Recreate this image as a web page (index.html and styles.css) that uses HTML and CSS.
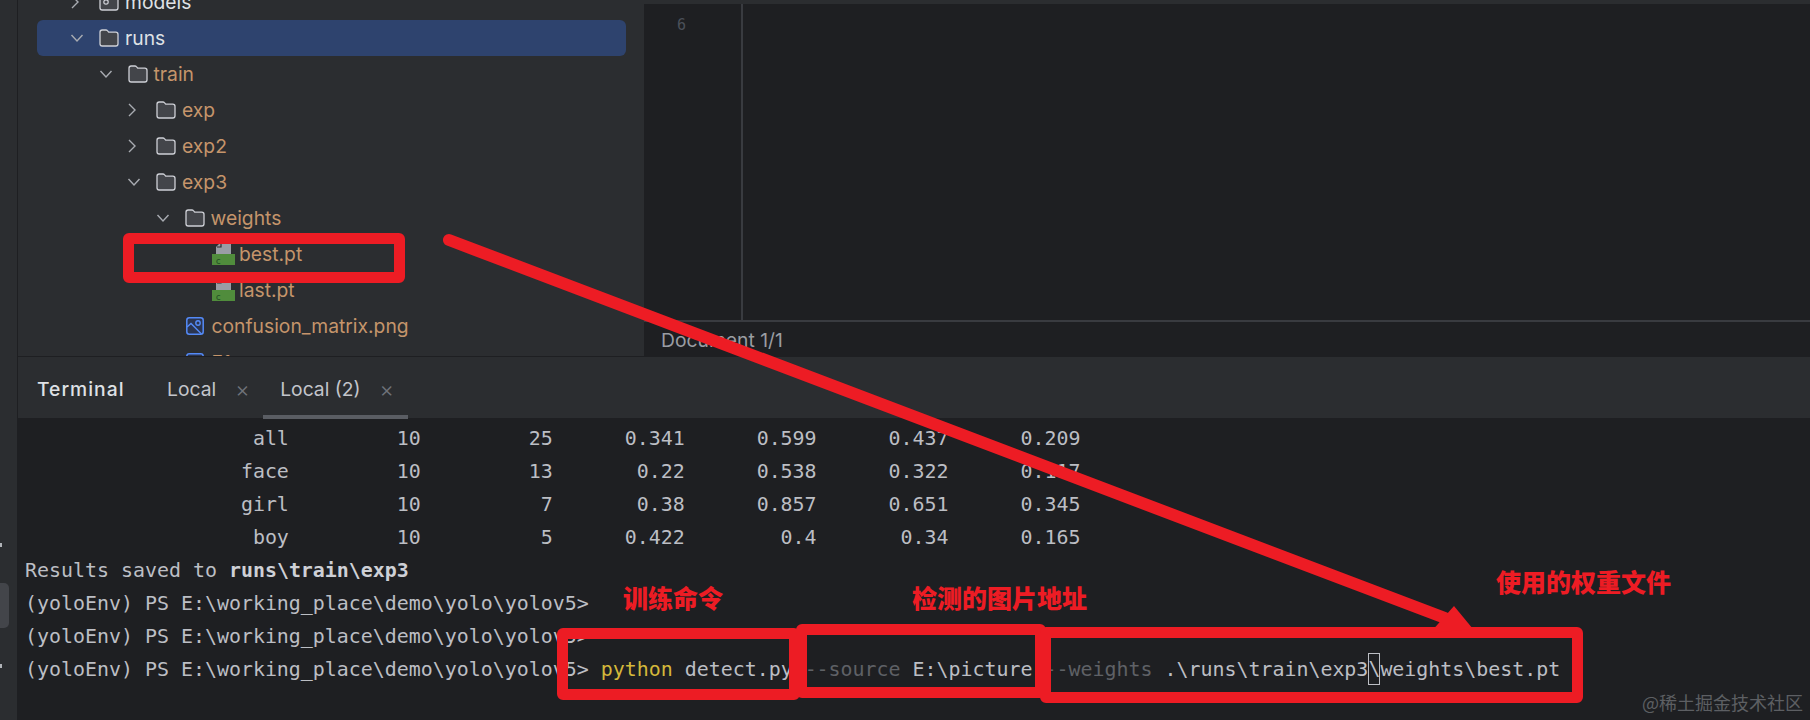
FILE: index.html
```html
<!DOCTYPE html>
<html lang="en">
<head>
<meta charset="utf-8">
<title>Terminal</title>
<link rel="stylesheet" href="styles.css">
</head>
<body>
<svg class="defs" width="0" height="0" aria-hidden="true">
  <symbol id="folder" viewBox="0 0 20 18"><path d="M1 3.200C1 2 2 1 3.200 1h3.700c.6 0 1.100.2 1.500.7l1.300 1.500h7.100C18 3.200 19 4.200 19 5.400v9.400C19 16 18 17 16.800 17H3.200C2 17 1 16 1 14.800z" fill="#43454a" stroke="#ced0d6" stroke-width="1.300"/></symbol>
  <symbol id="module" viewBox="0 0 20 18"><path d="M1 3.200C1 2 2 1 3.200 1h13.600C18 1 19 2 19 3.200v11.600C19 16 18 17 16.800 17H3.200C2 17 1 16 1 14.800z" fill="#43454a" stroke="#ced0d6" stroke-width="1.300"/><circle cx="7" cy="9" r="2.200" fill="none" stroke="#ced0d6" stroke-width="1.200"/></symbol>
  <symbol id="down" viewBox="0 0 14 10"><path d="M1.500 2l5.500 6 5.500-6" fill="none" stroke="#a8abb1" stroke-width="1.400"/></symbol>
  <symbol id="right" viewBox="0 0 10 14"><path d="M2 1l6 6-6 6" fill="none" stroke="#a8abb1" stroke-width="1.400"/></symbol>
  <symbol id="pt" viewBox="0 0 23 23"><path d="M9 0h10v12H4V5z" fill="#9a9da5"/><path d="M9 1v4H5" fill="none" stroke="#2b2d30" stroke-width="1.200"/><rect x="0" y="12" width="23" height="11" fill="#508c3c"/><text x="3.500" y="21.500" class="pt-letter">c</text></symbol>
  <symbol id="image" viewBox="0 0 18 18"><rect x=".8" y=".8" width="16.400" height="16.400" rx="2.500" fill="#2b3550" stroke="#548af7" stroke-width="1.500"/><circle cx="12" cy="6" r="2.200" fill="none" stroke="#548af7" stroke-width="1.400"/><path d="M1 10l4-3.500L15.500 17" fill="none" stroke="#548af7" stroke-width="1.400"/></symbol>
</svg>

<div class="app">
  <aside class="rail">
    <span class="rail-dot rail-dot-a"></span>
    <span class="rail-btn"></span>
    <span class="rail-dot rail-dot-b"></span>
  </aside>

  <div class="main">
    <div class="top">
      <nav class="sidebar">
        <div class="tree">
          <div class="row d0"><span class="chev"><svg class="chev-r"><use href="#right"/></svg></span><svg class="ic-folder"><use href="#module"/></svg><span class="label plain">models</span></div>
          <div class="row d0 selected"><span class="chev"><svg class="chev-d"><use href="#down"/></svg></span><svg class="ic-folder"><use href="#folder"/></svg><span class="label plain">runs</span></div>
          <div class="row d1"><span class="chev"><svg class="chev-d"><use href="#down"/></svg></span><svg class="ic-folder"><use href="#folder"/></svg><span class="label">train</span></div>
          <div class="row d2"><span class="chev"><svg class="chev-r"><use href="#right"/></svg></span><svg class="ic-folder"><use href="#folder"/></svg><span class="label">exp</span></div>
          <div class="row d2"><span class="chev"><svg class="chev-r"><use href="#right"/></svg></span><svg class="ic-folder"><use href="#folder"/></svg><span class="label">exp2</span></div>
          <div class="row d2"><span class="chev"><svg class="chev-d"><use href="#down"/></svg></span><svg class="ic-folder"><use href="#folder"/></svg><span class="label">exp3</span></div>
          <div class="row d3"><span class="chev"><svg class="chev-d"><use href="#down"/></svg></span><svg class="ic-folder"><use href="#folder"/></svg><span class="label">weights</span></div>
          <div class="row d4"><span class="chev"></span><svg class="ic-pt"><use href="#pt"/></svg><span class="label">best.pt</span></div>
          <div class="row d4"><span class="chev"></span><svg class="ic-pt"><use href="#pt"/></svg><span class="label">last.pt</span></div>
          <div class="row d3"><span class="chev"></span><svg class="ic-img"><use href="#image"/></svg><span class="label">confusion_matrix.png</span></div>
          <div class="row d3"><span class="chev"></span><svg class="ic-img"><use href="#image"/></svg><span class="label">F1_curve.png</span></div>
        </div>
      </nav>
      <section class="editor">
        <div class="editor-body">
          <div class="gutter"><span class="line-no">6</span></div>
          <div class="code"></div>
        </div>
        <div class="doc-status">Document 1/1</div>
      </section>
    </div>

    <section class="panel">
      <header class="panel-head">
        <span class="panel-title">Terminal</span>
        <span class="tab"><span>Local</span><span class="x">×</span></span>
        <span class="tab active"><span>Local (2)</span><span class="x">×</span></span>
      </header>
      <pre class="term">                   all         10         25      0.341      0.599      0.437      0.209
                  face         10         13       0.22      0.538      0.322      0.117
                  girl         10          7       0.38      0.857      0.651      0.345
                   boy         10          5      0.422        0.4       0.34      0.165
Results saved to <b>runs\train\exp3</b>
(yoloEnv) PS E:\working_place\demo\yolo\yolov5&gt;
(yoloEnv) PS E:\working_place\demo\yolo\yolov5&gt;
(yoloEnv) PS E:\working_place\demo\yolo\yolov5&gt; <span class="cmd">python</span> detect.py <span class="opt">--source</span> E:\picture <span class="opt">--weights</span> .\runs\train\exp3<span class="caret">\</span>weights\best.pt</pre>
    </section>
  </div>
</div>

<div class="notes">
  <span class="box box-best"></span>
  <span class="box box-cmd"></span>
  <span class="box box-src"></span>
  <span class="box box-wgt"></span>
  <svg class="arrow" viewBox="0 0 1810 720"><path d="M449 240L1445 618" stroke="#ed1c24" stroke-width="12" stroke-linecap="round" fill="none"/><path d="M1454 606L1473 629L1430 633z" fill="#ed1c24"/></svg>
  <span class="note note-cmd">训练命令</span>
  <span class="note note-src">检测的图片地址</span>
  <span class="note note-wgt">使用的权重文件</span>
  <span class="mark">@稀土掘金技术社区</span>
</div>
</body>
</html>
```

FILE: styles.css
```css
* { box-sizing: border-box; }
html, body { margin: 0; padding: 0; }
body {
  position: relative;
  width: 1810px;
  height: 720px;
  overflow: hidden;
  background: #1e1f22;
  font-family: Inter, "Noto Sans", sans-serif;
  font-size: 19.300px;
  color: #bcbec4;
}
.defs { position: absolute; }
.app { display: flex; height: 720px; }

/* rail */
.rail {
  width: 18px;
  flex: none;
  background: #2b2d30;
  border-right: 1px solid #1e1f22;
  display: flex;
  flex-direction: column;
  align-items: flex-start;
  padding-top: 543px;
}
.rail-dot { display: block; width: 2px; height: 4px; background: #b0b3b8; }
.rail-btn { display: block; width: 9px; height: 45px; margin-top: 36px; background: #43454a; border-radius: 0 5px 5px 0; }
.rail-dot-b { margin-top: 36px; }

.main { flex: 1; display: flex; flex-direction: column; min-width: 0; }
.top { height: 357px; display: flex; flex: none; }

/* project tree */
.sidebar {
  width: 626px;
  flex: none;
  overflow: hidden;
  background: #2b2d30;
  border-bottom: 1px solid #1e1f22;
  padding: 0 18px 0 19px;
}
.tree { margin-top: -16px; }
.row { height: 36px; display: flex; align-items: center; border-radius: 6px; }
.row.selected { background: #2e436e; }
.d0 { padding-left: 29px; }
.d1 { padding-left: 57.500px; }
.d2 { padding-left: 86px; }
.d3 { padding-left: 114.500px; }
.d4 { padding-left: 143px; }
.chev { width: 33px; flex: none; display: flex; align-items: center; padding-left: 4px; }
.chev-d { width: 14px; height: 10px; }
.chev-r { width: 10px; height: 14px; }
.ic-folder { width: 20px; height: 18px; flex: none; margin-right: 6px; }
.ic-pt { width: 23px; height: 23px; flex: none; margin-right: 4px; margin-top: -2px; margin-left: -1px; }
.ic-img { width: 18px; height: 18px; flex: none; margin-left: 1px; margin-right: 8px; }
.pt-letter { font: 9px "DejaVu Sans Mono", monospace; fill: #234f24; }
.label { color: #c5956b; white-space: nowrap; }
.label.plain { color: #dfe1e5; }

/* editor */
.editor { flex: 1; display: flex; flex-direction: column; background: #1e1f22; border-top: 4px solid #2b2d30; min-width: 0; }
.editor-body { flex: 1; display: flex; min-height: 0; border-bottom: 2px solid #393b40; }
.gutter { width: 99px; flex: none; border-right: 2px solid #393b40; padding: 7px 0 0 33px; }
.line-no { font-family: "DejaVu Sans Mono", monospace; font-size: 15px; color: #4b5059; line-height: 24px; }
.code { flex: 1; }
.doc-status { height: 35px; flex: none; display: flex; align-items: center; padding-left: 17px; color: #9a9da3; }

/* terminal panel */
.panel { flex: 1; display: flex; flex-direction: column; min-height: 0; }
.panel-head { height: 61px; flex: none; display: flex; align-items: stretch; background: #2b2d30; padding-left: 19px; }
.panel-title { display: flex; align-items: center; width: 113px; padding-top: 3px; font-weight: 500; color: #dfe1e5; letter-spacing: 1px; }
.tab { display: flex; align-items: center; gap: 19px; padding: 2px 16px 0 17px; height: 62px; position: relative; color: #c3c5cb; }
.tab .x { width: 12px; font-size: 22px; line-height: 1; color: #6f737a; text-align: center; font-weight: 300; }
.tab.active { border-bottom: 4px solid #5a5d63; padding-top: 6px; }
.term {
  margin: 0;
  padding: 4px 0 0 7px;
  font-family: "DejaVu Sans Mono", monospace;
  font-size: 19.930px;
  line-height: 33px;
  color: #bcbec4;
  white-space: pre;
}
.term b { font-weight: 700; color: #ced0d6; }
.cmd { color: #d4b83a; }
.opt { color: #5f6166; }
.caret { display: inline-block; height: 32px; line-height: 32px; vertical-align: top; box-shadow: inset 0 0 0 1px #bcbec4; }

/* annotations drawn on top of the screenshot */
.notes { position: absolute; inset: 0; pointer-events: none; }
.box { position: absolute; border: 11px solid #ed1c24; border-radius: 6px; }
.box-best { left: 123px; top: 233px; width: 282px; height: 50px; }
.box-cmd { left: 557px; top: 628px; width: 243px; height: 72px; }
.box-src { left: 796px; top: 624px; width: 250px; height: 74px; }
.box-wgt { left: 1040px; top: 627px; width: 543px; height: 76px; }
.arrow { position: absolute; left: 0; top: 0; width: 1810px; height: 720px; }
.note {
  position: absolute;
  font-family: "Noto Sans CJK SC", sans-serif;
  font-weight: 900;
  font-size: 25px;
  line-height: 30px;
  color: #ed1c24;
  white-space: nowrap;
}
.note-cmd { left: 623px; top: 582px; }
.note-src { left: 912px; top: 582px; }
.note-wgt { left: 1496px; top: 566px; }
.mark {
  position: absolute;
  left: 1642px;
  top: 691px;
  font-family: "Noto Sans CJK SC", sans-serif;
  font-size: 18px;
  line-height: 22px;
  color: #5d5f63;
  white-space: nowrap;
}
```
